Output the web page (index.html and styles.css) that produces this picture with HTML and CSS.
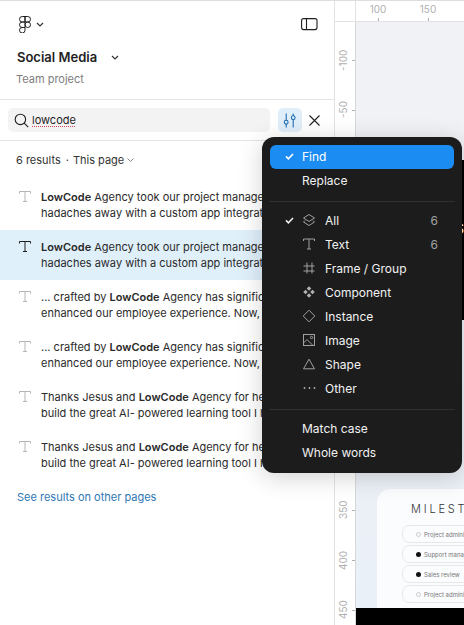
FILE: index.html
```html
<!DOCTYPE html>
<html lang="en">
<head>
    <meta charset="UTF-8">
    <meta name="viewport" content="width=device-width, initial-scale=1.0">
    <title>Find - Social Media</title>
    <link rel="stylesheet" href="styles.css">
</head>
<body>

    <!-- Left panel -->
    <div class="panel">
        <div class="panel-top">
            <div class="logo-row">
                <div class="logo-group">
                    <svg class="logo" width="12" height="17" viewBox="0 0 12 17" fill="none" stroke="#1e1e1e" stroke-width="1">
                        <path d="M6 .5H3.25a2.75 2.75 0 0 0 0 5.5H6zM6 .5h2.75a2.75 2.75 0 0 1 0 5.5H6zM6 6H3.25a2.75 2.75 0 0 0 0 5.5H6zM6 8.75a2.75 2.75 0 1 0 5.5 0a2.75 2.75 0 1 0-5.5 0zM6 11.5H3.25A2.75 2.75 0 1 0 6 14.25z"/>
                    </svg>
                    <svg class="caret" width="8" height="5" viewBox="0 0 8 5" fill="none" stroke="#333" stroke-width="1.2"><path d="M1 1l3 3 3-3"/></svg>
                </div>
                <svg width="17" height="13" viewBox="0 0 17 13" fill="none" stroke="#1e1e1e" stroke-width="1.1">
                    <rect x="0.6" y="0.6" width="15.4" height="11" rx="2"/>
                    <path d="M5.5 0.6v11"/>
                </svg>
            </div>
            <div class="title-row">
                <h1>Social Media</h1>
                <svg width="8" height="5" viewBox="0 0 8 5" fill="none" stroke="#333" stroke-width="1.2"><path d="M1 1l3 3 3-3"/></svg>
            </div>
            <div class="subtitle">Team project</div>
        </div>

        <!-- Search -->
        <div class="search-row">
            <div class="search-box">
                <svg width="15" height="15" viewBox="0 0 15 15" fill="none" stroke="#1e1e1e" stroke-width="1.1">
                    <circle cx="6.4" cy="6.4" r="5.2"/>
                    <path d="M10.2 10.2l4 4"/>
                </svg>
                <span class="search-text">lowcode</span>
            </div>
            <div class="filter-btn">
                <svg width="14" height="15" viewBox="0 0 14 15" fill="none" stroke="#1f6fb5" stroke-width="1.1">
                    <path d="M3.2 0.5v7M3.2 11v3.5M10.2 0.5v2.5M10.2 6.5v8"/>
                    <circle cx="3.2" cy="9.2" r="1.9"/>
                    <circle cx="10.2" cy="4.7" r="1.9"/>
                </svg>
            </div>
            <svg class="close" width="11" height="11" viewBox="0 0 11 11" fill="none" stroke="#1e1e1e" stroke-width="1.1"><path d="M0.5 0.5l10 10M10.5 0.5l-10 10"/></svg>
        </div>

        <!-- Results -->
        <div class="results-head">
            <span>6 results</span><span class="dot">·</span><span>This page</span>
            <svg width="7" height="4" viewBox="0 0 7 4" fill="none" stroke="#777" stroke-width="0.9"><path d="M0.5 0.5l3 3 3-3"/></svg>
        </div>
        <div class="results">
            <div class="result">
                <svg class="t-icon" width="12" height="11" viewBox="0 0 12 11"><path d="M.5 2.5V.5h11v2M6 .5v10M4 10.5h4"/></svg>
                <p><b>LowCode</b> Agency took our project management<br>hadaches away with a custom app integration</p>
            </div>
            <div class="result active">
                <svg class="t-icon" width="12" height="11" viewBox="0 0 12 11"><path d="M.5 2.5V.5h11v2M6 .5v10M4 10.5h4"/></svg>
                <p><b>LowCode</b> Agency took our project management<br>hadaches away with a custom app integration</p>
            </div>
            <div class="result">
                <svg class="t-icon" width="12" height="11" viewBox="0 0 12 11"><path d="M.5 2.5V.5h11v2M6 .5v10M4 10.5h4"/></svg>
                <p>... crafted by <b>LowCode</b> Agency has significantly<br>enhanced our employee experience. Now, we</p>
            </div>
            <div class="result">
                <svg class="t-icon" width="12" height="11" viewBox="0 0 12 11"><path d="M.5 2.5V.5h11v2M6 .5v10M4 10.5h4"/></svg>
                <p>... crafted by <b>LowCode</b> Agency has significantly<br>enhanced our employee experience. Now, we</p>
            </div>
            <div class="result">
                <svg class="t-icon" width="12" height="11" viewBox="0 0 12 11"><path d="M.5 2.5V.5h11v2M6 .5v10M4 10.5h4"/></svg>
                <p>Thanks Jesus and <b>LowCode</b> Agency for helping<br>build the great AI- powered learning tool I had</p>
            </div>
            <div class="result">
                <svg class="t-icon" width="12" height="11" viewBox="0 0 12 11"><path d="M.5 2.5V.5h11v2M6 .5v10M4 10.5h4"/></svg>
                <p>Thanks Jesus and <b>LowCode</b> Agency for helping<br>build the great AI- powered learning tool I had</p>
            </div>
        </div>
        <a class="other-pages">See results on other pages</a>
    </div>

    <!-- Canvas with rulers -->
    <div class="canvas-area">
        <div class="ruler-top">
            <div class="ruler-corner"></div>
            <div class="ruler-mark">100</div>
            <div class="ruler-mark">150</div>
        </div>
        <div class="canvas-body">
            <div class="ruler-left">
                <div class="ruler-v mark-n100"><span>-100</span></div>
                <div class="ruler-v mark-n50"><span>-50</span></div>
                <div class="ruler-v mark-350"><span>350</span></div>
                <div class="ruler-v mark-400"><span>400</span></div>
                <div class="ruler-v mark-450"><span>450</span></div>
            </div>
            <div class="canvas">
                <div class="dark-block"><span>S</span></div>
                <div class="milestones">
                    <div class="milestones-title">MILESTONES</div>
                    <div class="pill"><span class="pill-ring"></span>Project administration</div>
                    <div class="pill"><span class="pill-dot"></span>Support management</div>
                    <div class="pill"><span class="pill-dot"></span>Sales review</div>
                    <div class="pill"><span class="pill-ring"></span>Project administration</div>
                </div>
                <div class="black-bar"></div>
            </div>
        </div>
    </div>

    <!-- Dropdown menu -->
    <div class="menu">
        <div class="menu-item selected"><span class="check"><svg width="9" height="7" viewBox="0 0 9 7" fill="none" stroke="#fff" stroke-width="1.6"><path d="M1 3.4l2.4 2.4L8 1"/></svg></span>Find</div>
        <div class="menu-item"><span class="check"></span>Replace</div>
        <div class="menu-sep"></div>
        <div class="menu-item"><span class="check"><svg width="9" height="7" viewBox="0 0 9 7" fill="none" stroke="#eee" stroke-width="1.6"><path d="M1 3.4l2.4 2.4L8 1"/></svg></span>
            <svg class="menu-icon" width="14" height="14" viewBox="0 0 14 14" fill="none" stroke="#a0a0a0"><path d="M7 1.5l5.5 3.5L7 8.5 1.5 5zM3 7.5L1.5 9 7 12.5 12.5 9 11 7.5"/></svg>
            <span class="label">All</span><span class="count">6</span></div>
        <div class="menu-item"><span class="check"></span>
            <svg class="menu-icon" width="14" height="14" viewBox="0 0 14 14" fill="none" stroke="#a0a0a0"><path d="M1.5 4V2h11v2M7 2v10M5 12h4"/></svg>
            <span class="label">Text</span><span class="count">6</span></div>
        <div class="menu-item"><span class="check"></span>
            <svg class="menu-icon" width="14" height="14" viewBox="0 0 14 14" fill="none" stroke="#a0a0a0"><path d="M5 1.5v11M10 1.5v11M1.5 5h11M1.5 10h11"/></svg>
            <span class="label">Frame / Group</span></div>
        <div class="menu-item"><span class="check"></span>
            <svg class="menu-icon" width="14" height="14" viewBox="0 0 14 14" fill="#b0b0b0"><path d="M7 1.2l2.3 2.3L7 5.8 4.7 3.5zM7 8.2l2.3 2.3L7 12.8l-2.3-2.3zM3.5 4.7L5.8 7 3.5 9.3 1.2 7zM10.5 4.7L12.8 7l-2.3 2.3L8.2 7z"/></svg>
            <span class="label">Component</span></div>
        <div class="menu-item"><span class="check"></span>
            <svg class="menu-icon" width="14" height="14" viewBox="0 0 14 14" fill="none" stroke="#a0a0a0"><path d="M7 1.2L12.8 7 7 12.8 1.2 7z"/></svg>
            <span class="label">Instance</span></div>
        <div class="menu-item"><span class="check"></span>
            <svg class="menu-icon" width="14" height="14" viewBox="0 0 14 14" fill="none" stroke="#a0a0a0"><rect x="1.5" y="1.5" width="11" height="11"/><path d="M1.5 10l3.5-3.5 6 6"/><circle cx="9.5" cy="4.5" r="1.2"/></svg>
            <span class="label">Image</span></div>
        <div class="menu-item"><span class="check"></span>
            <svg class="menu-icon" width="14" height="14" viewBox="0 0 14 14" fill="none" stroke="#a0a0a0"><path d="M7 2.2L12.5 11.8h-11z"/></svg>
            <span class="label">Shape</span></div>
        <div class="menu-item"><span class="check"></span>
            <svg class="menu-icon" width="14" height="14" viewBox="0 0 14 14" fill="#b0b0b0"><circle cx="2.5" cy="7" r="0.9"/><circle cx="7.5" cy="7" r="0.9"/><circle cx="12.5" cy="7" r="0.9"/></svg>
            <span class="label">Other</span></div>
        <div class="menu-sep"></div>
        <div class="menu-item"><span class="check"></span>Match case</div>
        <div class="menu-item"><span class="check"></span>Whole words</div>
    </div>

</body>
</html>
```

FILE: styles.css
```css
* {
    box-sizing: border-box;
}

body {
    font-family: Inter, Arial, sans-serif;
    margin: 0;
    width: 464px;
    height: 625px;
    display: flex;
    overflow: hidden;
    background-color: white;
    color: #1e1e1e;
    border-top: 1px solid #dedede;
}

/* Left panel */
.panel {
    width: 335px;
    flex-shrink: 0;
    border-right: 1px solid #e3e3e3;
    overflow: hidden;
}

.panel-top {
    padding: 15px 17px 0 17px;
    height: 99px;
    border-bottom: 1px solid #e4e4e4;
}

.logo-row {
    display: flex;
    justify-content: space-between;
    align-items: center;
    height: 17px;
}

.logo-group {
    display: flex;
    align-items: center;
    gap: 5px;
    padding-left: 2px;
}

.logo-row > svg {
    margin-right: -1px;
}

.title-row {
    display: flex;
    align-items: center;
    gap: 14px;
    margin-top: 16px;
}

.title-row h1 {
    font-size: 13px;
    font-weight: 600;
    margin: 0;
    line-height: 16px;
}

.subtitle {
    font-size: 11px;
    color: #7d7d7d;
    margin: 7px 0 0 -1px;
    line-height: 14px;
}

/* Search */
.search-row {
    display: flex;
    align-items: center;
    height: 41px;
    padding-left: 8px;
    border-bottom: 1px solid #e4e4e4;
}

.search-box {
    width: 262px;
    height: 24px;
    background-color: #f3f3f3;
    border-radius: 5px;
    display: flex;
    align-items: center;
    gap: 3px;
    padding-left: 6px;
}

.search-text {
    font-size: 11px;
    text-decoration: underline dotted #d0455f;
    text-underline-offset: 2px;
}

.filter-btn {
    width: 24px;
    height: 24px;
    margin-left: 8px;
    border-radius: 5px;
    background-color: #e0eefa;
    display: flex;
    align-items: center;
    justify-content: center;
}

.close {
    margin-left: 7px;
}

/* Results */
.results-head {
    display: flex;
    align-items: center;
    font-size: 11px;
    color: #333;
    padding: 0 0 1px 16px;
    height: 39px;
    line-height: 14px;
}

.results-head .dot {
    margin: 0 4px 0 5px;
}

.results-head svg {
    margin-left: 3px;
}

.result {
    display: flex;
    height: 50px;
    padding-top: 9px;
    padding-left: 19px;
}

.result.active {
    background-color: #e0f0fb;
}

.result p {
    margin: 0 0 0 10px;
    font-size: 11px;
    line-height: 16px;
    white-space: nowrap;
    color: #2a2a2a;
}

.result b {
    font-weight: 600;
}

.t-icon {
    margin-top: 2px;
    flex-shrink: 0;
    fill: none;
    stroke: #b5b5b5;
    stroke-width: 1;
}

.active .t-icon {
    stroke: #1e1e1e;
}

.other-pages {
    display: block;
    font-size: 11px;
    color: #2f77b5;
    padding: 10px 0 0 17px;
    line-height: 14px;
}

/* Canvas */
.canvas-area {
    flex-grow: 1;
    display: flex;
    flex-direction: column;
    min-width: 0;
}

.ruler-top {
    height: 21px;
    display: flex;
    border-bottom: 1px solid #e2e2e2;
    font-size: 10px;
    color: #b0b0b0;
    flex-shrink: 0;
}

.ruler-corner {
    width: 21px;
    flex-shrink: 0;
    border-right: 1px solid #e2e2e2;
}

.ruler-mark {
    width: 50px;
    flex-shrink: 0;
    text-align: center;
    line-height: 16px;
    margin-left: -3px;
    margin-right: 3px;
    position: relative;
}

.ruler-mark::after {
    content: "";
    position: absolute;
    left: 25px;
    bottom: 0;
    width: 1px;
    height: 3px;
    background-color: #b0b0b0;
}

.canvas-body {
    flex-grow: 1;
    display: flex;
    min-height: 0;
}

.ruler-left {
    width: 21px;
    flex-shrink: 0;
    border-right: 1px solid #d8d8d8;
    position: relative;
    font-size: 10px;
    color: #b0b0b0;
}

.ruler-v {
    position: absolute;
    left: 0;
    right: 0;
    height: 0;
}

.ruler-v::after {
    content: "";
    position: absolute;
    right: 0;
    top: 0;
    width: 3px;
    height: 1px;
    background-color: #b0b0b0;
}

.ruler-v span {
    position: absolute;
    left: 0;
    width: 16px;
    height: 30px;
    top: -15px;
    writing-mode: vertical-rl;
    transform: rotate(180deg);
    line-height: 16px;
    text-align: center;
}

.mark-n100 { top: 38px; }
.mark-n50 { top: 88px; }
.mark-350 { top: 488px; }
.mark-400 { top: 538px; }
.mark-450 { top: 588px; }

.canvas {
    flex-grow: 1;
    background: linear-gradient(#f1f2f5, #eaf0f8);
    position: relative;
    overflow: hidden;
}

.dark-block {
    position: absolute;
    top: 138px;
    right: 0;
    width: 60px;
    height: 160px;
    background-color: black;
    color: white;
    font-size: 15px;
    font-weight: 600;
    display: flex;
    justify-content: flex-end;
    align-items: center;
    padding-bottom: 24px;
}

.milestones {
    position: absolute;
    left: 21px;
    top: 467px;
    width: 120px;
    height: 140px;
    background-color: #fbfcfe;
    border-radius: 14px;
    padding: 13px 0 0 25px;
    overflow: hidden;
}

.milestones-title {
    font-size: 11px;
    font-weight: 300;
    letter-spacing: 2.8px;
    color: #333;
    white-space: nowrap;
    line-height: 14px;
    margin: 0 0 9px 9px;
}

.pill {
    width: 120px;
    height: 18px;
    margin: 0 0 2px 0;
    border: 1px solid #e8e8e8;
    border-radius: 7px;
    font-size: 6px;
    color: #777;
    white-space: nowrap;
    display: flex;
    align-items: center;
    gap: 3px;
    padding-left: 13px;
}

.pill-dot {
    width: 5px;
    height: 5px;
    flex-shrink: 0;
    background-color: #111;
    border-radius: 50%;
}

.pill-ring {
    width: 5px;
    height: 5px;
    flex-shrink: 0;
    border: 1px solid #ccc;
    border-radius: 50%;
}

.black-bar {
    position: absolute;
    left: 0;
    right: 0;
    bottom: 0;
    height: 17px;
    background-color: black;
}

/* Dropdown menu */
.menu {
    position: absolute;
    left: 262px;
    top: 137px;
    width: 200px;
    height: 336px;
    background-color: #1c1c1c;
    border-radius: 12px;
    padding: 8px;
    color: #f2f2f2;
    font-size: 12px;
    box-shadow: 0 4px 24px rgba(0, 0, 0, 0.18);
}

.menu-item {
    display: flex;
    align-items: center;
    height: 24px;
    padding-bottom: 2px;
    border-radius: 6px;
}

.menu-item.selected {
    background-color: #1b8cf2;
    color: white;
}

.check {
    width: 32px;
    padding-left: 15px;
    display: flex;
    align-items: center;
    flex-shrink: 0;
}

.menu-icon {
    margin-right: 9px;
}

.label {
    flex-grow: 1;
}

.count {
    color: #a5a5a5;
    margin-right: 16px;
}

.menu-sep {
    height: 1px;
    background-color: #303030;
    margin: 8px -1px 7px;
}
```
